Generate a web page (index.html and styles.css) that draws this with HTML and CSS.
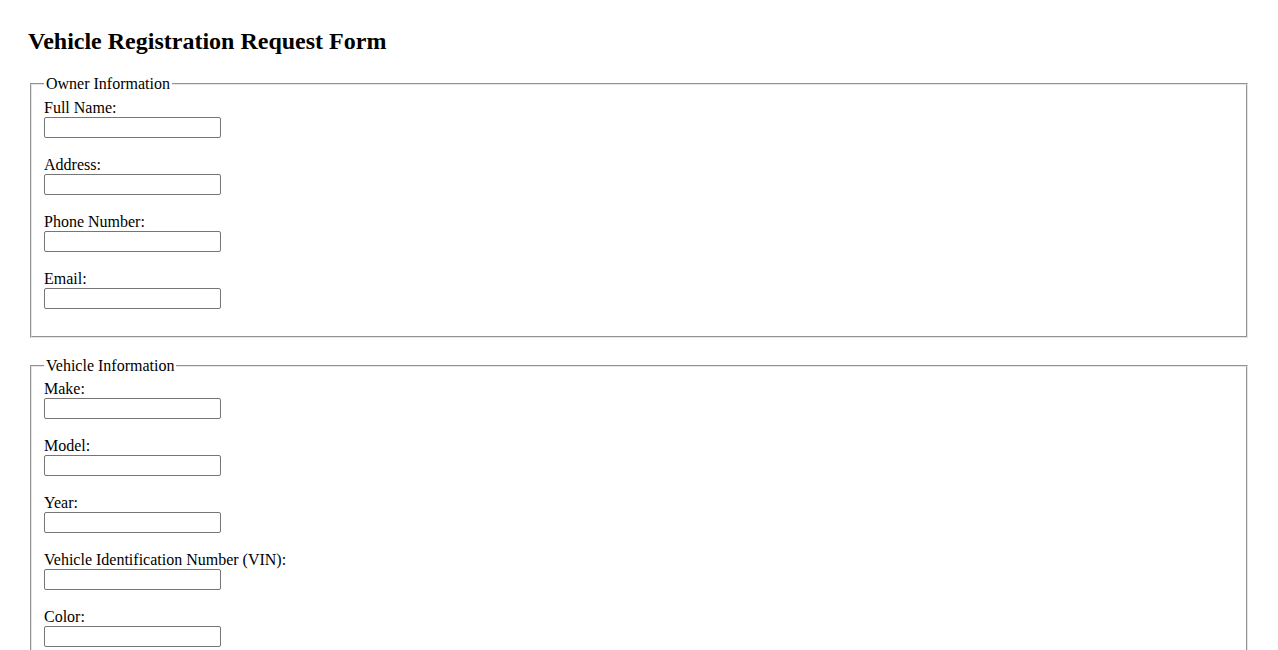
FILE: index.html
```html
<!DOCTYPE html>
<html>
<head>
<meta charset="utf-8">
<title>Vehicle Registration Request Form</title>
<link rel="stylesheet" href="styles.css">
</head>
<body>
<h2 class="title">Vehicle Registration Request Form</h2>
<form class="form">
  <fieldset class="group">
    <legend class="group-legend">Owner Information</legend>
    <label class="field-label" for="fullname">Full Name:</label><br>
    <input class="field-input" type="text" id="fullname"><br><br>
    <label class="field-label" for="address">Address:</label><br>
    <input class="field-input" type="text" id="address"><br><br>
    <label class="field-label" for="phone">Phone Number:</label><br>
    <input class="field-input" type="text" id="phone"><br><br>
    <label class="field-label" for="email">Email:</label><br>
    <input class="field-input" type="text" id="email"><br><br>
  </fieldset>
  <fieldset class="group">
    <legend class="group-legend">Vehicle Information</legend>
    <label class="field-label" for="make">Make:</label><br>
    <input class="field-input" type="text" id="make"><br><br>
    <label class="field-label" for="model">Model:</label><br>
    <input class="field-input" type="text" id="model"><br><br>
    <label class="field-label" for="year">Year:</label><br>
    <input class="field-input" type="text" id="year"><br><br>
    <label class="field-label" for="vin">Vehicle Identification Number (VIN):</label><br>
    <input class="field-input" type="text" id="vin"><br><br>
    <label class="field-label" for="color">Color:</label><br>
    <input class="field-input" type="text" id="color"><br><br>
  </fieldset>
</form>
</body>
</html>
```
FILE: styles.css
```css
body {
  margin: 0;
  padding: 28px 28px;
  font-family: "Liberation Serif", "Times New Roman", serif;
  font-size: 16px;
  color: #000;
  background: #fff;
}

.title {
  margin: 0 0 20px 0;
  font-size: 24px;
  font-weight: bold;
}

.form {
  margin: 0;
}

.group {
  margin: 0 2px 19px 2px;
  padding: 5.6px 12px 9px 12px;
  border-width: 2px;
  border-style: groove;
  border-color: #e6e6e6;
}

.group-legend {
  padding: 0 2px;
}

.field-input {
  box-sizing: border-box;
  width: 177px;
  height: 21px;
  padding: 1px 2px;
  border: 1px solid #767676;
  border-radius: 2px;
  font-family: "Liberation Sans", Arial, sans-serif;
  font-size: 13.33px;
  vertical-align: middle;
  margin: 0;
}
```
